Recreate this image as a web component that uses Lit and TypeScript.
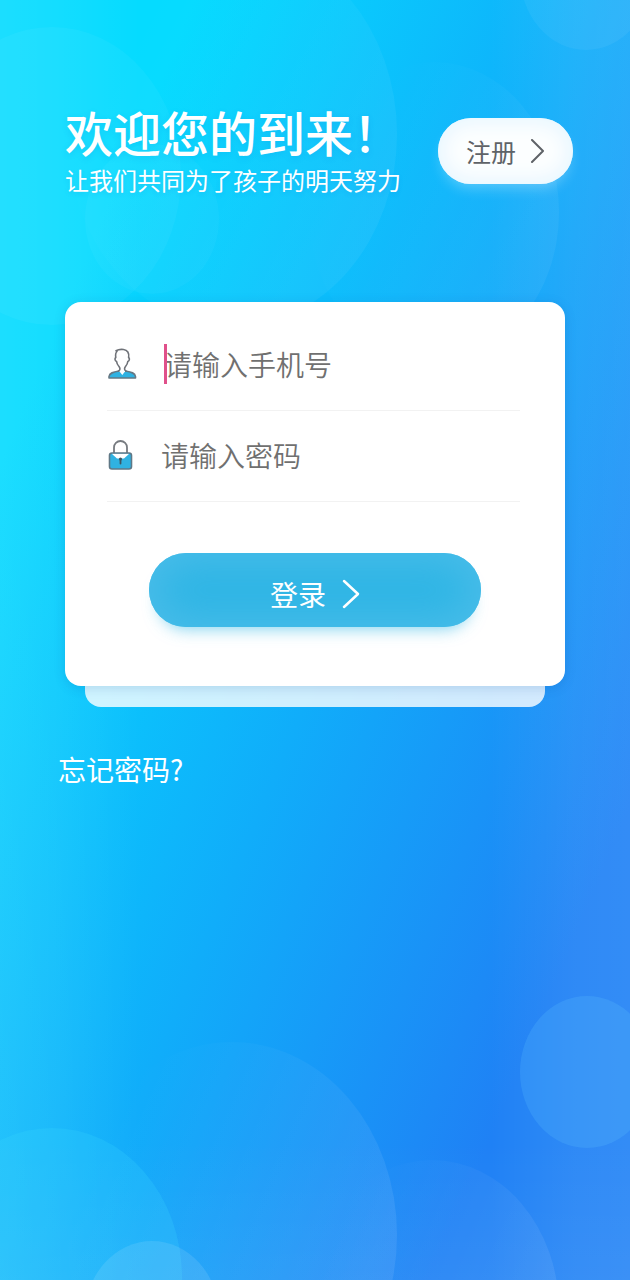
import { LitElement, html, css, svg } from "lit";
import { customElement } from "lit/decorators.js";

@customElement("page-backdrop")
class PageBackdrop extends LitElement {
  static styles = css`
    :host { display: block; }
    svg { display: block; width: 100%; height: 100%; }
  `;

  private bubble(cx: number, cy: number, rx: number, ry: number, fill: string) {
    return svg`<ellipse cx=${cx} cy=${cy} rx=${rx} ry=${ry} fill=${fill} />`;
  }

  render() {
    return html`
      <svg viewBox="0 0 630 1280" preserveAspectRatio="none" aria-hidden="true">
        <defs>
          <linearGradient id="sky" gradientUnits="userSpaceOnUse" x1="0" y1="0" x2="823" y2="343">
            <stop offset="0.2" stop-color="#05dbff" />
            <stop offset="0.62" stop-color="#10adfa" />
            <stop offset="1" stop-color="#1f81f5" />
          </linearGradient>
          <linearGradient id="left">
            <stop offset="0" stop-color="#fff" stop-opacity="0.09" />
            <stop offset="0.4" stop-color="#fff" stop-opacity="0.06" />
            <stop offset="1" stop-color="#fff" stop-opacity="0" />
          </linearGradient>
          <linearGradient id="right">
            <stop offset="0" stop-color="#fff" stop-opacity="0" />
            <stop offset="0.6" stop-color="#fff" stop-opacity="0.07" />
            <stop offset="1" stop-color="#fff" stop-opacity="0.09" />
          </linearGradient>
          <linearGradient id="floor" x1="0" y1="0" x2="0" y2="1">
            <stop offset="0" stop-color="#fff" stop-opacity="0" />
            <stop offset="1" stop-color="#fff" stop-opacity="0.04" />
          </linearGradient>
          <linearGradient id="fade" x1="0.2" y1="0.1" x2="0.95" y2="0.5">
            <stop offset="0" stop-color="#fff" stop-opacity="0" />
            <stop offset="1" stop-color="#fff" stop-opacity="0.08" />
          </linearGradient>
          <linearGradient id="faint" x1="0.35" y1="0" x2="1" y2="0.4">
            <stop offset="0" stop-color="#fff" stop-opacity="0" />
            <stop offset="1" stop-color="#fff" stop-opacity="0.05" />
          </linearGradient>
        </defs>
        <rect width="630" height="1280" fill="url(#sky)" />
        <rect width="140" height="1280" fill="url(#left)" />
        <rect x="490" width="140" height="1280" fill="url(#right)" />
        <rect y="1140" width="630" height="140" fill="url(#floor)" />
        ${this.bubble(52, 176, 129, 149, "rgba(255,255,255,0.04)")}
        ${this.bubble(232, 134, 165, 193, "url(#faint)")}
        ${this.bubble(434, 212, 125, 150, "url(#faint)")}
        ${this.bubble(586, -26, 66, 76, "rgba(255,255,255,0.05)")}
        ${this.bubble(152, 219, 67, 75, "rgba(255,255,255,0.03)")}
        ${this.bubble(52, 1277, 130, 149, "rgba(60,220,255,0.2)")}
        ${this.bubble(232, 1235, 165, 193, "url(#fade)")}
        ${this.bubble(432, 1310, 127, 150, "url(#fade)")}
        ${this.bubble(587, 1072, 67, 76, "rgba(100,200,255,0.2)")}
        ${this.bubble(152, 1316, 67, 75, "rgba(255,255,255,0.1)")}
      </svg>
    `;
  }
}

@customElement("app-root")
class AppRoot extends LitElement {
  static styles = css`
    :host {
      display: block;
      font-family: "Noto Sans CJK SC", sans-serif;
      color: #fff;
    }
    .page {
      position: relative;
      min-height: 100vh;
      box-sizing: border-box;
      overflow: hidden;
      padding: 101px 57px 40px 58px;
      display: flex;
      flex-direction: column;
    }
    .backdrop { position: absolute; inset: 0; }
    header {
      position: relative;
      display: flex;
      justify-content: space-between;
      align-items: flex-start;
      padding-left: 7px;
    }
    h1 {
      margin: 0;
      font-size: 48px;
      line-height: 60px;
      font-weight: 500;
      white-space: nowrap;
      text-shadow: 0 2px 6px rgba(0, 110, 200, 0.15);
    }
    .tagline {
      margin: 0;
      font-size: 24px;
      line-height: 38px;
      white-space: nowrap;
      text-shadow: 0 2px 4px rgba(0, 110, 200, 0.15);
    }
    button {
      font-family: inherit;
      border: 0;
      margin: 0;
      cursor: pointer;
      display: flex;
      align-items: center;
      justify-content: center;
    }
    .register {
      height: 66px;
      margin-top: 17px;
      padding: 0 28px;
      gap: 14px;
      border-radius: 33px;
      font-size: 25px;
      line-height: 36px;
      color: #5f6368;
      background: #fcfeff;
      box-shadow: inset 0 0 20px 4px #e6f6ff, 0 8px 14px -4px rgba(255, 255, 255, 0.3);
    }
    main {
      position: relative;
      margin: 103px 8px 0 7px;
    }
    .card {
      position: relative;
      background: #fff;
      border-radius: 16px;
      padding: 18px 45px 59px 42px;
      box-shadow: 0 2px 12px rgba(0, 60, 140, 0.16);
    }
    .layer {
      height: 21px;
      margin: 0 20px;
      border-radius: 0 0 16px 16px;
      background: rgba(255, 255, 255, 0.8);
    }
    .field {
      display: flex;
      align-items: center;
      height: 88px;
      padding-bottom: 2px;
      gap: 27px;
      border-bottom: 1px solid #f2f2f2;
    }
    .field label { display: flex; }
    .box {
      position: relative;
      flex: 1;
      min-width: 0;
      display: flex;
    }
    input {
      width: 100%;
      min-width: 0;
      border: 0;
      padding: 0;
      margin: 0;
      outline: none;
      background: transparent;
      font-family: inherit;
      font-size: 28px;
      line-height: 40px;
      height: 40px;
      color: #444;
    }
    input::placeholder {
      color: #707070;
      font-weight: 350;
      opacity: 1;
    }
    .caret {
      position: absolute;
      left: 0;
      top: 0;
      width: 3px;
      height: 40px;
      background: #e0508a;
    }
    .login {
      height: 74px;
      width: calc(100% - 81px);
      margin: 51px 39px 0 42px;
      gap: 16px;
      padding: 8px 0 0;
      border-radius: 37px;
      font-size: 28px;
      line-height: 40px;
      color: #fff;
      background: #2eb5e5;
      box-shadow: inset 0 0 40px 8px #4abde9, 0 12px 16px -10px rgba(46, 181, 229, 0.6);
    }
    .forgot {
      position: relative;
      align-self: flex-start;
      margin-top: 42px;
      font-size: 28px;
      line-height: 40px;
      color: #fff;
      text-decoration: none;
    }
    svg { display: block; flex: none; }
  `;

  render() {
    return html`
      <div class="page">
        <page-backdrop class="backdrop"></page-backdrop>
        <header>
          <div>
            <h1>欢迎您的到来！</h1>
            <p class="tagline">让我们共同为了孩子的明天努力</p>
          </div>
          <button class="register" type="button">
            注册
            <svg width="15" height="24" viewBox="0 0 15 24" fill="none" stroke="currentColor" stroke-width="2" stroke-linecap="round" stroke-linejoin="round" aria-hidden="true">
              <path d="M2 1 13 12 2 23" />
            </svg>
          </button>
        </header>
        <main>
          <form class="card" @submit=${(e: Event) => e.preventDefault()}>
            <div class="field">
              <label for="phone" aria-label="请输入手机号">
                <svg width="30" height="32" viewBox="0 0 30 32" stroke-linejoin="round" aria-hidden="true">
                  <path d="M2 30V28.500C2.500 25 6 24 12 23H18.500C24.500 24 28 25 28.500 28.500V30Z" fill="#2fb2e2" stroke="#667884" stroke-width="1.600" />
                  <path d="M12.500 18H18V23.500L15.300 27 12.500 23.500Z" fill="#fff" />
                  <path d="M11.500 23C13.500 22 13.200 20 12 18.500C10.500 17 9.800 15.500 9.600 13.500C7.800 13 7.500 10.500 8.800 9.500C8.300 6.500 8.800 4.500 10 3.500L9 2.800C11.500 1.300 14 1.200 16.500 1.500C20.500 2 22.400 5 21.600 9.500C22.900 10.500 22.600 13 20.800 13.500C20.600 15.500 19.900 17 18.500 18.500C17.300 20 17 22 19 23" fill="#fff" stroke="#6f7278" stroke-width="1.600" stroke-linecap="round" />
                </svg>
              </label>
              <div class="box">
                <input id="phone" type="tel" placeholder="请输入手机号" />
                <span class="caret"></span>
              </div>
            </div>
            <div class="field">
              <label for="password" aria-label="请输入密码">
                <svg width="27" height="30" viewBox="0 0 27 30" aria-hidden="true">
                  <path d="M7 13V7.500a6.500 6.500 0 0 1 13 0V13" fill="none" stroke="#777b80" stroke-width="1.800" />
                  <rect x="2.500" y="13" width="22" height="16" rx="2.500" fill="#2fb2e2" />
                  <path d="M4.500 13.500H22.500L17 18.500H10Z" fill="#fff" />
                  <rect x="2.500" y="13" width="22" height="16" rx="2.500" fill="none" stroke="#607886" stroke-width="1.600" />
                  <path d="M13.500 19V23.500" stroke="#3d5561" stroke-width="1.800" stroke-linecap="round" />
                  <circle cx="13.500" cy="19" r="1.500" fill="#3d5561" />
                </svg>
              </label>
              <div class="box">
                <input id="password" type="password" placeholder="请输入密码" />
              </div>
            </div>
            <button class="login" type="submit">
              登录
              <svg width="18" height="30" viewBox="0 0 18 30" fill="none" stroke="currentColor" stroke-width="2.500" stroke-linecap="round" stroke-linejoin="round" aria-hidden="true">
                <path d="M2 2 16 15 2 28" />
              </svg>
            </button>
          </form>
          <div class="layer"></div>
        </main>
        <a class="forgot" href="#">忘记密码?</a>
      </div>
    `;
  }
}
